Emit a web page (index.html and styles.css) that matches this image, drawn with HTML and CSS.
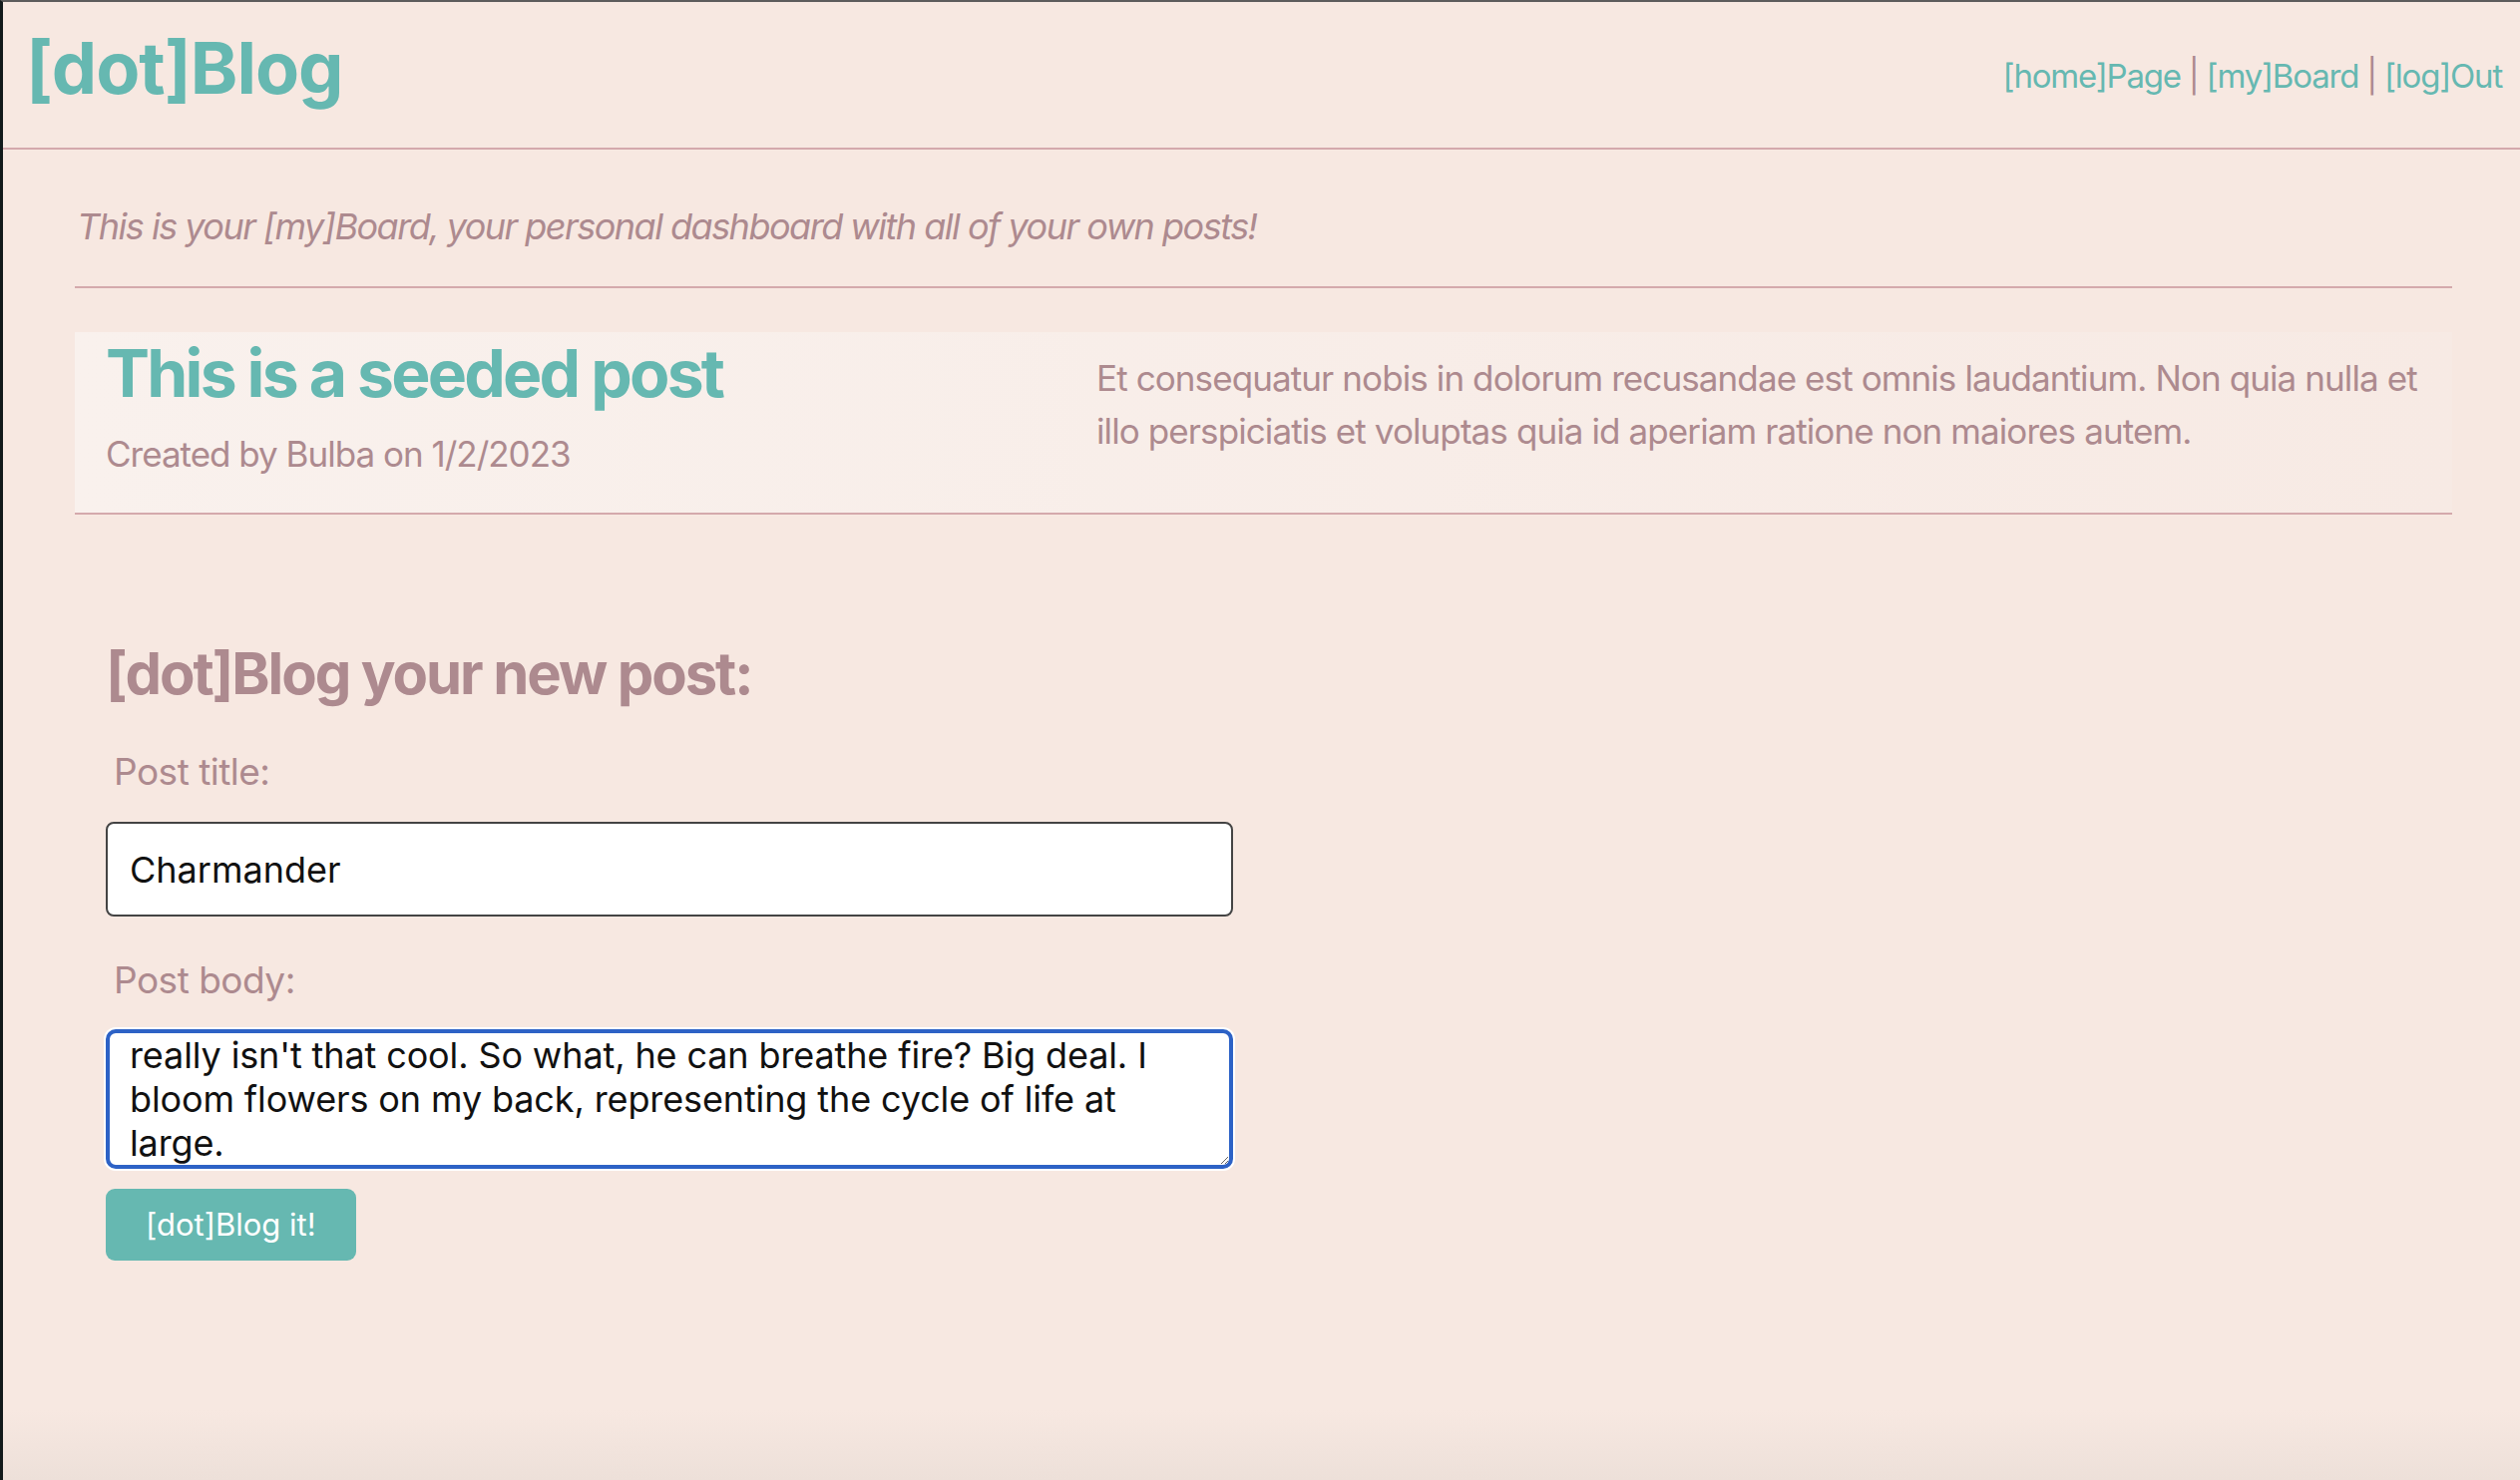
FILE: index.html
```html
<!DOCTYPE html>
<html lang="en">
<head>
<meta charset="utf-8">
<title>[dot]Blog</title>
<link rel="stylesheet" href="styles.css">
</head>
<body>
<div class="page">
  <header class="site-header">
    <a class="logo" href="#">[dot]Blog</a>
    <nav class="nav">
      <a href="#">[home]Page</a><span class="sep">|</span><a href="#">[my]Board</a><span class="sep">|</span><a href="#">[log]Out</a>
    </nav>
  </header>
  <main class="main">
    <p class="intro">This is your [my]Board, your personal dashboard with all of your own posts!</p>
    <hr class="divider">
    <article class="post">
      <div class="post-head">
        <h2 class="post-title">This is a seeded post</h2>
        <p class="post-meta">Created by Bulba on 1/2/2023</p>
      </div>
      <p class="post-body">Et consequatur nobis in dolorum recusandae est omnis laudantium. Non quia nulla et illo perspiciatis et voluptas quia id aperiam ratione non maiores autem.</p>
    </article>
    <section class="new-post">
      <h3 class="form-heading">[dot]Blog your new post:</h3>
      <form class="form">
        <label class="label" for="title">Post title:</label>
        <input class="input" id="title" type="text" value="Charmander">
        <label class="label label-body" for="body">Post body:</label>
        <textarea class="textarea" id="body">really isn't that cool. So what, he can breathe fire? Big deal. I
bloom flowers on my back, representing the cycle of life at
large.</textarea>
        <button class="btn" type="button">[dot]Blog it!</button>
      </form>
    </section>
  </main>
</div>
</body>
</html>
```
FILE: styles.css
```css
* { box-sizing: border-box; }
html, body { margin: 0; padding: 0; }
body {
  font-family: Inter, "Noto Sans", "Liberation Sans", sans-serif;
  background: #f7e8e1;
  color: #ad8a8f;
}
.page {
  min-height: 1484px;
  border-top: 2px solid #5d5c5c;
  border-left: 3px solid #121a1b;
  background: linear-gradient(to bottom, #f7e8e1 0, #f7e8e1 calc(100% - 70px), #ede0d9 100%);
}
.site-header {
  display: flex;
  justify-content: space-between;
  align-items: flex-start;
  height: 148px;
  padding: 30px 18px 0 23px;
  border-bottom: 2px solid #d4a9ac;
}
.logo {
  font-size: 72px;
  line-height: 72px;
  font-weight: 700;
  color: #66b8b1;
  text-decoration: none;
  letter-spacing: -1px;
}
.nav {
  margin-top: 28px;
  font-size: 33px;
  line-height: 33px;
  color: #ad8a8f;
  letter-spacing: -1.2px;
}
.nav a { color: #66b8b1; text-decoration: none; }
.nav .sep { margin: 0 8px; }
.main {
  padding: 0 68px 0 72px;
}
.intro {
  margin: 55px 0 0 2px;
  font-size: 36px;
  line-height: 44px;
  font-style: italic;
  color: #ad8a8f;
  letter-spacing: -1.5px;
}
.divider {
  margin: 38px 0 0 0;
  border: 0;
  border-top: 2px solid #d4a9ac;
  height: 0;
}
.post {
  margin-top: 44px;
  display: grid;
  grid-template-columns: 993px 1fr;
  padding: 8px 10px 37px 31px;
  background: linear-gradient(to right, #f9f1ed, #f7eae4);
  border-bottom: 2px solid #d4a9ac;
}
.post-title {
  margin: 0;
  font-size: 66px;
  line-height: 66px;
  font-weight: 700;
  color: #66b8b1;
  letter-spacing: -2.8px;
}
.post-meta {
  margin: 26px 0 0 0;
  font-size: 35px;
  line-height: 44px;
  letter-spacing: -1px;
}
.post-body {
  margin: 12px 0 0 0;
  font-size: 35px;
  line-height: 53px;
  letter-spacing: -0.9px;
}
.new-post {
  padding-left: 31px;
}
.form-heading {
  margin: 130px 0 0 0;
  font-size: 58px;
  line-height: 58px;
  font-weight: 700;
  color: #ad8a8f;
  letter-spacing: -2.1px;
}
.form {
  display: flex;
  flex-direction: column;
  align-items: flex-start;
}
.label {
  margin: 48px 0 0 8px;
  font-size: 37px;
  line-height: 44px;
  color: #ad8a8f;
  letter-spacing: -0.5px;
}
.label-body { margin-top: 42px; }
.input {
  margin-top: 28px;
  width: 1130px;
  height: 95px;
  padding: 0 22px;
  border: 2px solid #444;
  border-radius: 8px;
  background: #fff;
  font-family: Inter, "Noto Sans", sans-serif;
  font-size: 36px;
  color: #111;
}
.textarea {
  margin-top: 27px;
  width: 1130px;
  height: 140px;
  padding: 0 20px;
  border: 4px solid #2d62c6;
  border-radius: 10px;
  box-shadow: 0 0 0 2px #fff;
  background: #fff;
  font-family: Inter, "Noto Sans", sans-serif;
  font-size: 36px;
  line-height: 44px;
  letter-spacing: -0.12px;
  color: #111;
  resize: vertical;
  overflow: hidden;
  outline: none;
}
.btn {
  margin-top: 20px;
  height: 72px;
  padding: 0 40px;
  border: 0;
  border-radius: 9px;
  background: #66b8b1;
  color: #fff;
  font-family: Inter, "Noto Sans", sans-serif;
  font-size: 31px;
  line-height: 38px;
}
```
